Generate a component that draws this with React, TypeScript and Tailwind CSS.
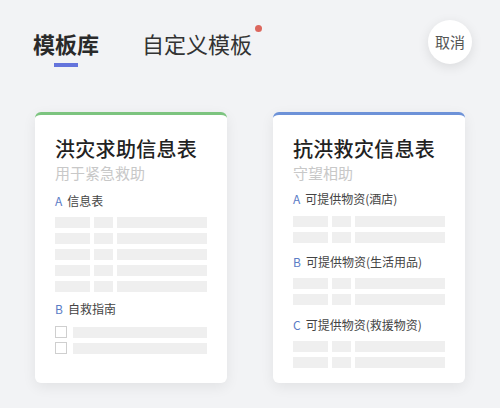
import React from 'react'

const FONT = '"Noto Sans CJK SC", "Noto Sans", sans-serif'

function Bars({ rows }: { rows: number }) {
  return (
    <div className="flex flex-col gap-[5px]">
      {Array.from({ length: rows }).map((_, i) => (
        <div key={i} className="flex gap-[4px] h-[11px]">
          <div className="w-[35px] bg-[#efefef]" />
          <div className="w-[19px] bg-[#efefef]" />
          <div className="flex-1 bg-[#efefef]" />
        </div>
      ))}
    </div>
  )
}

function Label({ letter, text, className = '' }: { letter: string; text: string; className?: string }) {
  return (
    <div className={`flex items-center gap-[5px] text-[12px] leading-[16px] text-[#444] ${className}`}>
      <span className="text-[#5b7cc6]">{letter}</span>
      <span>{text}</span>
    </div>
  )
}

function Card({
  color,
  title,
  subtitle,
  children,
}: {
  color: string
  title: string
  subtitle: string
  children: React.ReactNode
}) {
  return (
    <div
      className={`w-[192px] h-[271px] bg-white rounded-[6px] border-t-[3px] ${color} shadow-[0_4px_14px_rgba(0,0,0,0.07)] px-[20px] pt-[20px]`}
    >
      <div className="text-[20px] leading-[28px] font-medium text-[#222] tracking-[0.3px]">{title}</div>
      <div className="text-[15px] leading-[20px] text-[#c8c8c8]">{subtitle}</div>
      {children}
    </div>
  )
}

export default function App() {
  return (
    <div className="w-[500px] h-[408px] bg-[#f2f3f5] overflow-hidden" style={{ fontFamily: FONT }}>
      {/* Header */}
      <div className="flex items-start justify-between pl-[33px] pr-[28px] pt-[20px]">
        <div className="flex items-start gap-[43px] mt-[8px]">
          <div className="flex flex-col items-center">
            <span className="text-[22px] leading-[30px] font-bold text-[#2a2a2a]">模板库</span>
            <div className="mt-[5px] w-[24px] h-[4px] bg-[#6474dc]" />
          </div>
          <div className="relative">
            <span className="text-[22px] leading-[30px] text-[#333]">自定义模板</span>
            <span className="absolute -right-[10px] -top-[3px] w-[7px] h-[7px] rounded-full bg-[#dc675d]" />
          </div>
        </div>
        <button className="w-[44px] h-[44px] rounded-full bg-white shadow-[0_3px_12px_rgba(0,0,0,0.1)] flex items-center justify-center text-[15px] text-[#555]">
          取消
        </button>
      </div>

      {/* Cards */}
      <div className="flex gap-[46px] px-[35px] mt-[45px]">
        <Card color="border-[#7cc47f]" title="洪灾求助信息表" subtitle="用于紧急救助">
          <Label letter="A" text="信息表" className="mt-[10px]" />
          <div className="mt-[8px]">
            <Bars rows={5} />
          </div>
          <Label letter="B" text="自救指南" className="mt-[9px]" />
          <div className="mt-[9px] flex flex-col gap-[4px]">
            {[0, 1].map((i) => (
              <div key={i} className="flex items-center gap-[6px]">
                <div className="w-[12px] h-[12px] border border-[#cfcfcf] bg-white" />
                <div className="flex-1 h-[11px] bg-[#efefef]" />
              </div>
            ))}
          </div>
        </Card>
        <Card color="border-[#6d92d8]" title="抗洪救灾信息表" subtitle="守望相助">
          <Label letter="A" text="可提供物资(酒店)" className="mt-[8px]" />
          <div className="mt-[9px]">
            <Bars rows={2} />
          </div>
          <Label letter="B" text="可提供物资(生活用品)" className="mt-[11px]" />
          <div className="mt-[8px]">
            <Bars rows={2} />
          </div>
          <Label letter="C" text="可提供物资(救援物资)" className="mt-[12px]" />
          <div className="mt-[8px]">
            <Bars rows={2} />
          </div>
        </Card>
      </div>
    </div>
  )
}
